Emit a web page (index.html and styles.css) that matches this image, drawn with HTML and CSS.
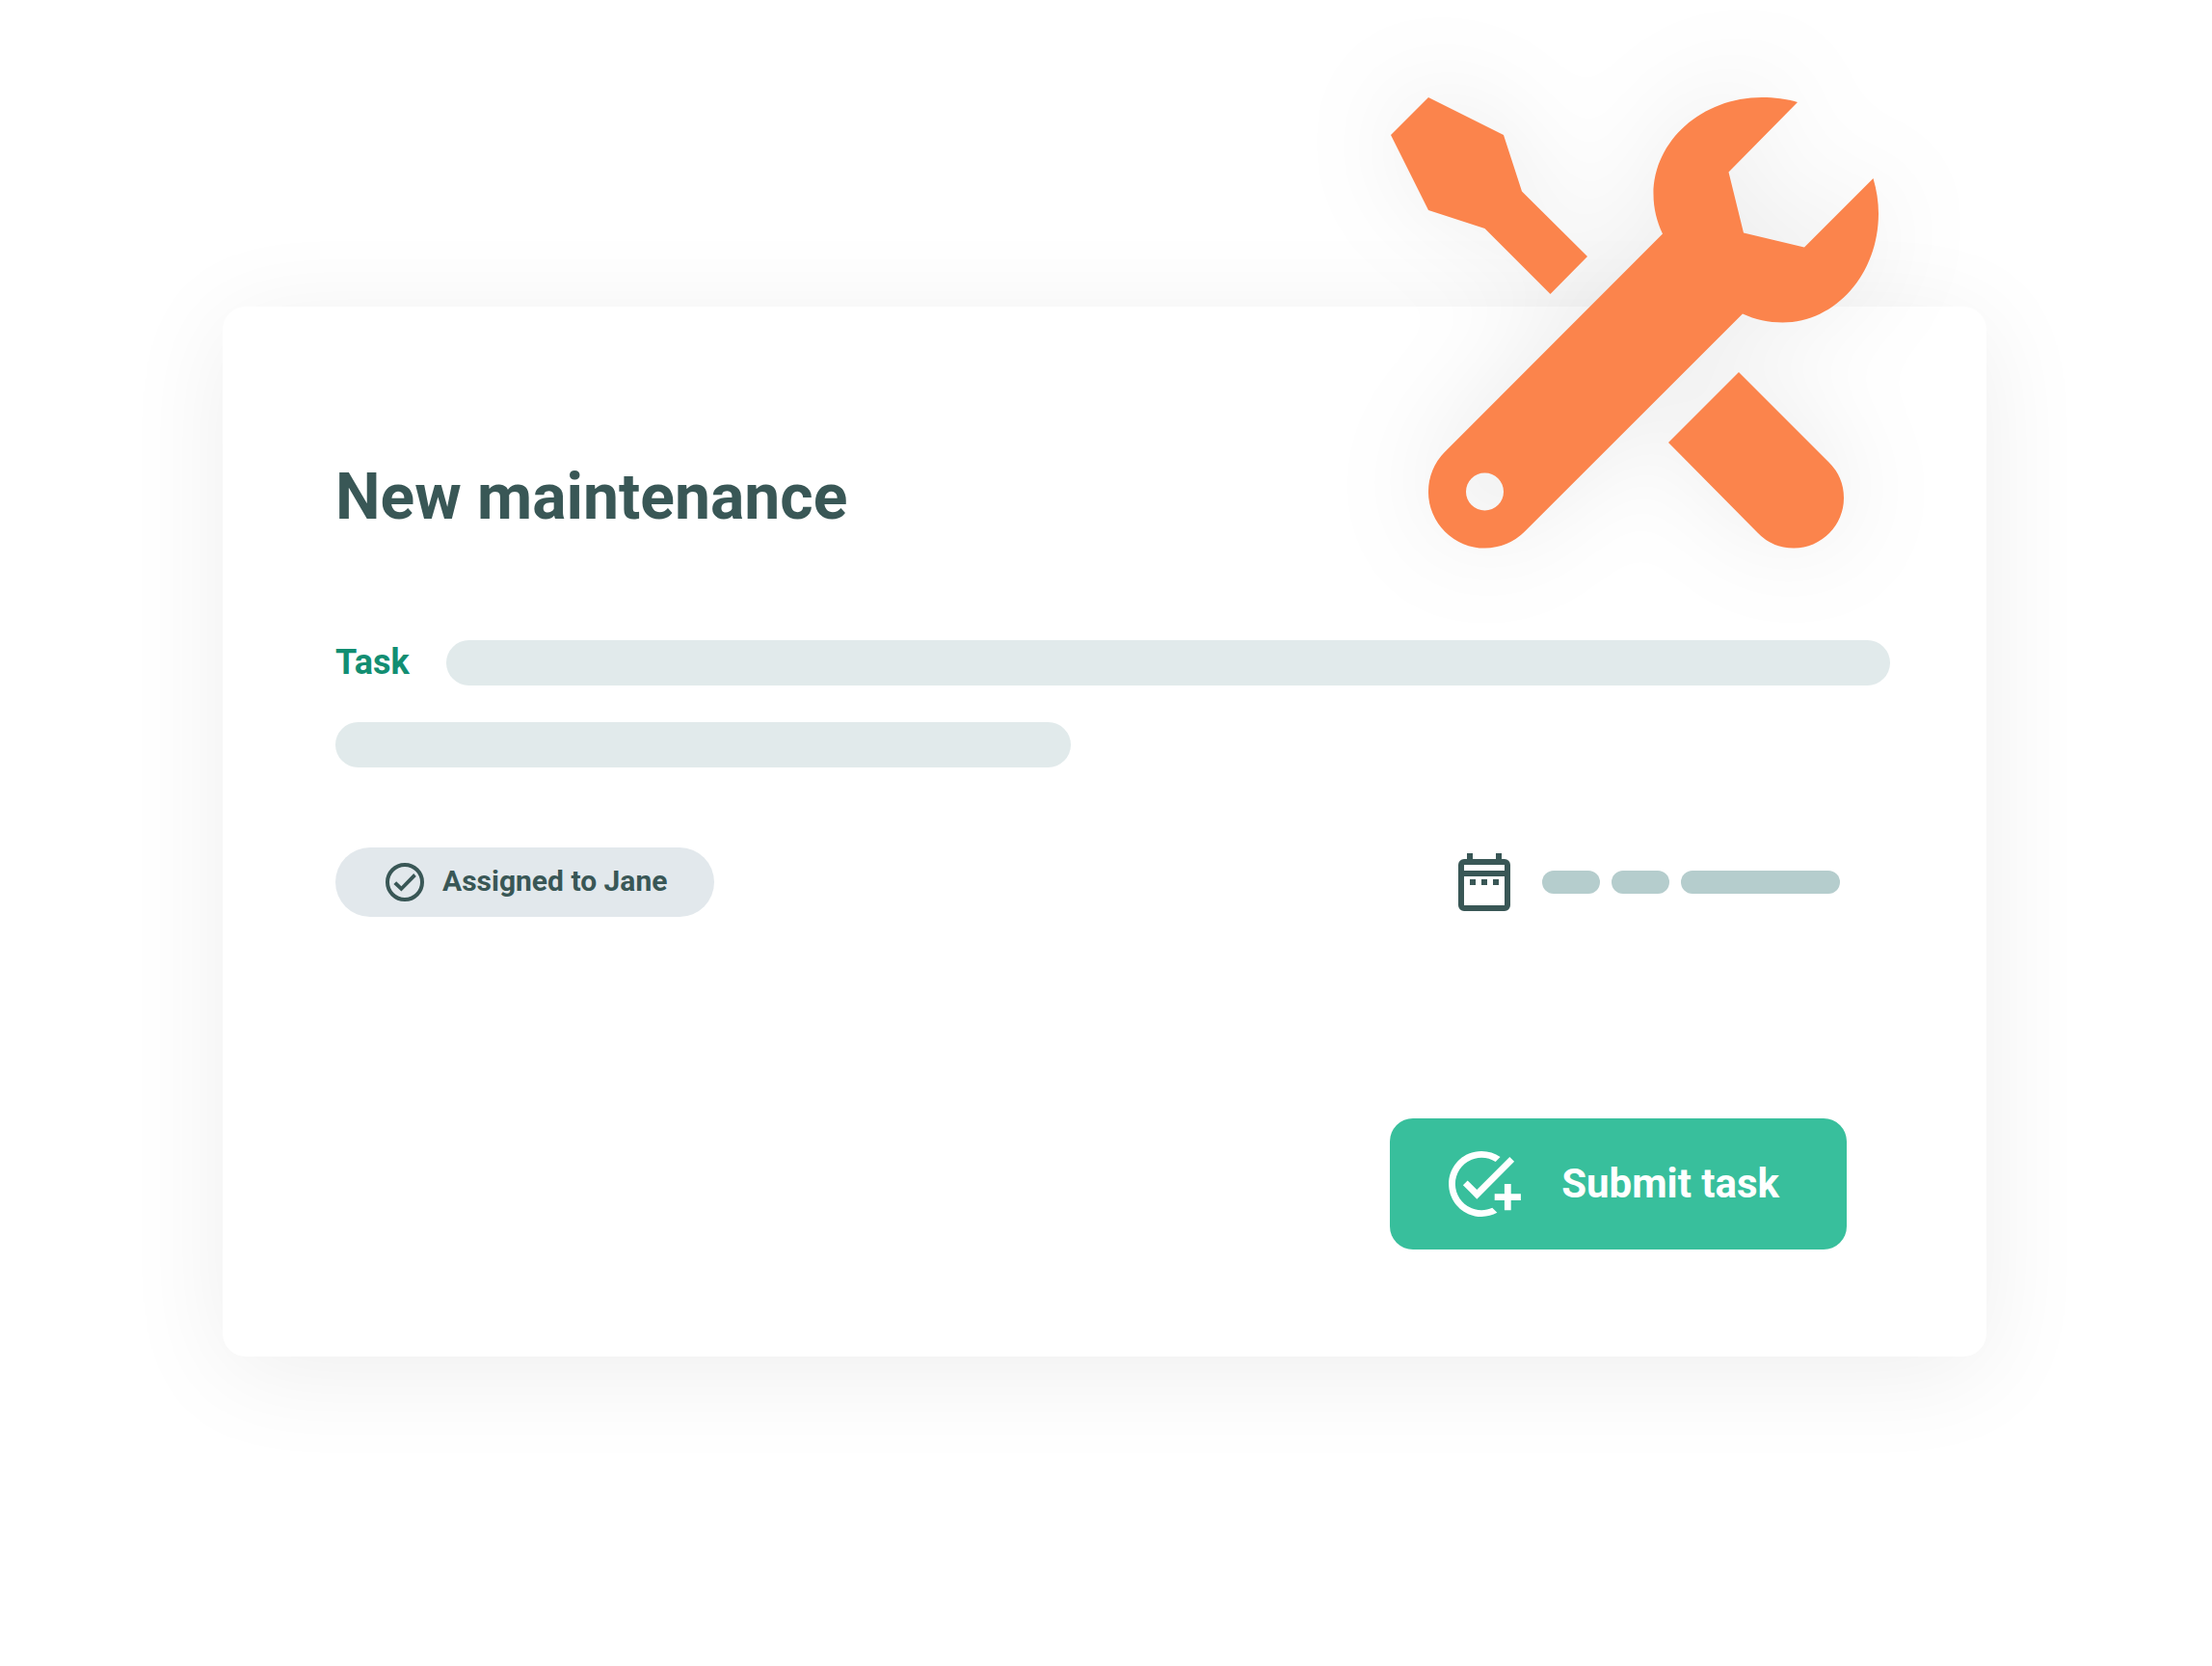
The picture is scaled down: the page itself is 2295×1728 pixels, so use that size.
FILE: index.html
```html
<!DOCTYPE html>
<html lang="en">
<head>
  <meta charset="UTF-8" />
  <meta name="viewport" content="width=device-width, initial-scale=1" />
  <title>New maintenance</title>
  <link rel="stylesheet" href="styles.css">
</head>
<body>
  <main class="card">
    <svg class="tools" viewBox="0 0 506 468" aria-hidden="true">
      <!-- screwdriver -->
      <path d="M39 0L117 39L136 97.500L204 165L165.500 204L97.500 136L39 117L0 39Z" />
      <path d="M361 285L454.500 378.500A52 52 0 0 1 470 415.500A52 52 0 0 1 418.500 467.500A52 52 0 0 1 380.500 451.500L288 358Z" />
      <!-- wrench -->
      <path fill-rule="evenodd" d="M422 5L350.500 77.500L366 140.500L429 155.500L500.500 84C504 96 506 108 506 120.500C506 183 461.500 233.500 406.500 233.500C392 233.500 378 230.500 365 224.500L139 450.300A58.500 58.500 0 1 1 56 367.700L282 141.500C276 129 272.500 115 272.500 100.500C272.500 45 323 0 385 0C398 0 411 1.500 422 5ZM97.500 389.500a19.500 19.500 0 1 0 0 39a19.500 19.500 0 1 0 0 -39Z" />
    </svg>

    <h1>New maintenance</h1>

    <div class="task">
      <span class="task-label">Task</span>
      <div class="line"></div>
    </div>
    <div class="line line-short"></div>

    <div class="meta">
      <div class="assigned">
        <svg class="check" viewBox="2 2 20 20" aria-hidden="true">
          <circle cx="12" cy="12" r="9" fill="none" stroke="currentColor" stroke-width="2" />
          <path d="M6.200 13L7.600 11.600L10.200 14.100L16.600 7.500L17.900 9L10.200 16.800Z" />
        </svg>
        <span>Assigned to Jane</span>
      </div>
      <div class="date">
        <svg class="calendar" viewBox="3 1 18 20" aria-hidden="true">
          <path fill-rule="evenodd" d="M6 1h2v2h8V1h2v2h1a2 2 0 0 1 2 2v14a2 2 0 0 1-2 2H5a2 2 0 0 1-2-2V5a2 2 0 0 1 2-2h1zM5 5v2h14V5zM5 9v10h14V9z" />
          <path d="M7 10h2v2H7zM11 10h2v2h-2zM15 10h2v2h-2z" />
        </svg>
        <div class="date-parts">
          <span class="part"></span>
          <span class="part"></span>
          <span class="part part-long"></span>
        </div>
      </div>
    </div>

    <button type="button" class="submit">
      <svg class="add-task" viewBox="2 2 22 20" aria-hidden="true">
        <path d="M22 5.180L10.590 16.600l-4.240-4.240 1.410-1.410 2.830 2.830 10-10zM12 20c-4.420 0-8-3.580-8-8s3.580-8 8-8c1.570 0 3.040.46 4.280 1.250l1.450-1.450C16.100 2.670 14.130 2 12 2 6.480 2 2 6.480 2 12s4.480 10 10 10c1.730 0 3.360-.44 4.780-1.220l-1.500-1.500c-1 .46-2.110.72-3.280.72zM19 15h-3v2h3v3h2v-3h3v-2h-3v-3h-2z" />
      </svg>
      <span>Submit task</span>
    </button>
  </main>
</body>
</html>
```
FILE: styles.css
```css
* {
  box-sizing: border-box;
}

body {
  margin: 0;
  padding: 318px 234px 100px 231px;
  font-family: Roboto, "Liberation Sans", sans-serif;
  font-weight: 700;
  color: #395756;
  background: #fff;
}

.card {
  position: relative;
  display: flex;
  flex-direction: column;
  padding: 159px 100px 111px 117px;
  border-radius: 24px;
  background: #fff;
  box-shadow: 0 16px 110px rgba(0, 0, 0, 0.07);
}

/* Sticks out over the top edge of the card */
.tools {
  position: absolute;
  top: -217px;
  right: 112px;
  width: 506px;
  fill: #fb844c;
  overflow: visible;
  filter: drop-shadow(0 -6px 54px rgba(0, 0, 0, 0.08));
}

h1 {
  margin: 0 0 109px;
  font-size: 66px;
  line-height: 78px;
}

.task {
  display: flex;
  align-items: flex-start;
  gap: 38px;
  margin-bottom: 38px;
}

.task-label {
  font-size: 36px;
  line-height: 46px;
  color: #128e72;
}

.line {
  flex: 1;
  height: 47px;
  border-radius: 24px;
  background: #e1eaeb;
}

.line-short {
  flex: none;
  width: 47.3%;
}

.meta {
  display: flex;
  align-items: center;
  justify-content: space-between;
  margin-top: 83px;
  padding-right: 52px;
}

.assigned {
  display: flex;
  align-items: center;
  gap: 19px;
  height: 72px;
  padding: 0 49px 0 52px;
  border-radius: 36px;
  font-size: 30px;
  line-height: 36px;
  background: #e2e8ec;
}

.assigned span {
  padding-bottom: 2px;
}

.check {
  width: 40px;
  height: 40px;
  fill: currentColor;
}

.date {
  display: flex;
  align-items: center;
  gap: 33px;
}

.calendar {
  width: 54px;
  height: 60px;
  fill: currentColor;
}

.date-parts {
  display: flex;
  gap: 12px;
}

.part {
  width: 60px;
  height: 24px;
  border-radius: 12px;
  background: #b5cdcd;
}

.part-long {
  width: 165px;
}

.submit {
  display: flex;
  align-items: center;
  align-self: flex-end;
  gap: 42px;
  height: 136px;
  margin: 209px 45px 0 0;
  padding: 0 70px 0 61px;
  border: none;
  border-radius: 24px;
  font: inherit;
  font-size: 42px;
  line-height: 50px;
  color: #fff;
  background: #38bf9c;
  cursor: pointer;
}

.add-task {
  width: 75px;
  height: 68px;
  fill: currentColor;
}
```
